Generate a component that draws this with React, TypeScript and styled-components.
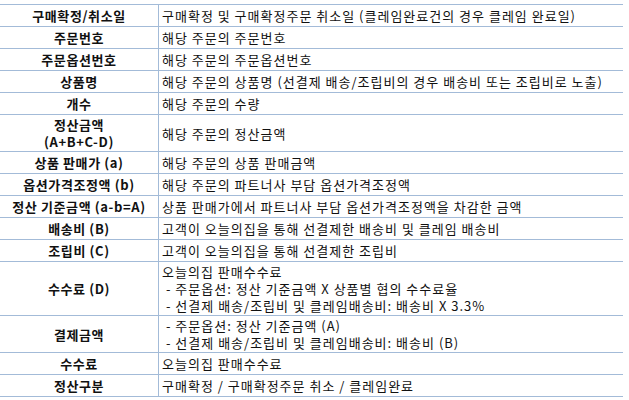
import React from "react";
import styled, { createGlobalStyle } from "styled-components";

const Global = createGlobalStyle`
  html, body { margin: 0; padding: 0; background: #ffffff; }
  body { font-family: "Noto Sans CJK KR", "Noto Sans", sans-serif; color: #111; }
`;

const Table = styled.div`
  margin-top: 4px;
  width: 623px;
  border-bottom: 1px solid #a3bbd8;
  font-size: 13px;
  line-height: 17px;
`;

const Row = styled.div`
  display: grid;
  grid-template-columns: 159px 1fr;
  border-top: 1px solid #a3bbd8;
`;

const Head = styled.div`
  border-right: 1px solid #a3bbd8;
  font-weight: 700;
  letter-spacing: 0.6px;
  text-align: center;
  display: flex;
  flex-direction: column;
  justify-content: center;
  padding: 1px 0;
  min-height: 19px;
  white-space: nowrap;
`;

const Cell = styled.div`
  display: flex;
  flex-direction: column;
  justify-content: center;
  padding: 1px 3px;
  min-height: 19px;
  letter-spacing: 1px;
  white-space: nowrap;
`;

const Line = styled.span`
  display: block;
  white-space: pre;
`;

type Item = { h: string[]; d: string[] };

const rows: Item[] = [
  { h: ["구매확정/취소일"], d: ["구매확정 및 구매확정주문 취소일 (클레임완료건의 경우 클레임 완료일)"] },
  { h: ["주문번호"], d: ["해당 주문의 주문번호"] },
  { h: ["주문옵션번호"], d: ["해당 주문의 주문옵션번호"] },
  { h: ["상품명"], d: ["해당 주문의 상품명 (선결제 배송/조립비의 경우 배송비 또는 조립비로 노출)"] },
  { h: ["개수"], d: ["해당 주문의 수량"] },
  { h: ["정산금액", "(A+B+C-D)"], d: ["해당 주문의 정산금액"] },
  { h: ["상품 판매가 (a)"], d: ["해당 주문의 상품 판매금액"] },
  { h: ["옵션가격조정액 (b)"], d: ["해당 주문의 파트너사 부담 옵션가격조정액"] },
  { h: ["정산 기준금액 (a-b=A)"], d: ["상품 판매가에서 파트너사 부담 옵션가격조정액을 차감한 금액"] },
  { h: ["배송비 (B)"], d: ["고객이 오늘의집을 통해 선결제한 배송비 및 클레임 배송비"] },
  { h: ["조립비 (C)"], d: ["고객이 오늘의집을 통해 선결제한 조립비"] },
  {
    h: ["수수료 (D)"],
    d: [
      "오늘의집 판매수수료",
      " - 주문옵션: 정산 기준금액 X 상품별 협의 수수료율",
      " - 선결제 배송/조립비 및 클레임배송비: 배송비 X 3.3%",
    ],
  },
  {
    h: ["결제금액"],
    d: [" - 주문옵션: 정산 기준금액 (A)", " - 선결제 배송/조립비 및 클레임배송비: 배송비 (B)"],
  },
  { h: ["수수료"], d: ["오늘의집 판매수수료"] },
  { h: ["정산구분"], d: ["구매확정 / 구매확정주문 취소 / 클레임완료"] },
];

export default function App() {
  return (
    <>
      <Global />
      <Table>
        {rows.map((r, i) => (
          <Row key={i}>
            <Head>
              {r.h.map((t, j) => (
                <Line key={j}>{t}</Line>
              ))}
            </Head>
            <Cell>
              {r.d.map((t, j) => (
                <Line key={j}>{t}</Line>
              ))}
            </Cell>
          </Row>
        ))}
      </Table>
    </>
  );
}
